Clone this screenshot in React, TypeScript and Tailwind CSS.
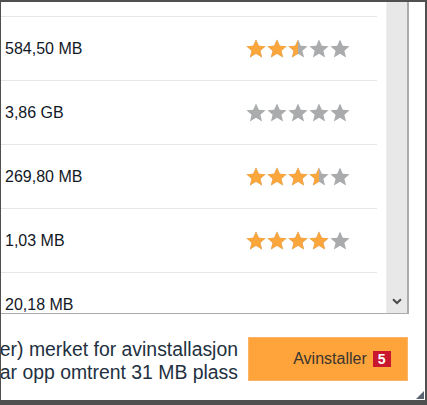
import React from 'react';

type Row = { size: string; rating: number | null };

const rows: Row[] = [
  { size: '584,50 MB', rating: 2.5 },
  { size: '3,86 GB', rating: 0 },
  { size: '269,80 MB', rating: 3.5 },
  { size: '1,03 MB', rating: 4 },
  { size: '20,18 MB', rating: null },
];

const STAR = '10,0.6 12.8,6.8 19.6,7.3 14.4,11.7 16.1,18.6 10,14.8 3.9,18.6 5.6,11.7 0.4,7.3 7.2,6.8';

const Stars: React.FC<{ value: number; id: string }> = ({ value, id }) => (
  <svg width="104" height="19" viewBox="0 0 104 19">
    {[0, 1, 2, 3, 4].map((i) => {
      const fill = Math.max(0, Math.min(1, value - i));
      return (
        <g key={i} transform={`translate(${i * 21}, 0)`}>
          <polygon points={STAR} fill="#a9abac" />
          {fill > 0 && (
            <>
              <clipPath id={`${id}-${i}`}>
                <rect x="0" y="0" width={20 * fill} height="20" />
              </clipPath>
              <polygon points={STAR} fill="#fba63c" clipPath={`url(#${id}-${i})`} />
            </>
          )}
        </g>
      );
    })}
  </svg>
);

export default function App() {
  return (
    <div className="w-[427px] h-[405px] bg-white border-t-2 border-l border-r-2 border-b-[5px] border-[#505050] flex flex-col overflow-hidden">
      {/* List box */}
      <div className="h-[312px] w-[408px] flex border-r-2 border-b border-[#ababab] shrink-0">
        <div className="flex-1 pt-[14px] pr-[9px] overflow-hidden">
          {rows.map((r, idx) => (
            <div
              key={idx}
              className="h-[64px] border-t border-[#e6e6e6] flex items-center justify-between pl-[4px] pr-[27px]"
            >
              <span className="text-[16px] text-[#121826] font-['Liberation_Sans',Arial,sans-serif]">{r.size}</span>
              {r.rating !== null && <Stars value={r.rating} id={`s${idx}`} />}
            </div>
          ))}
        </div>
        <div className="w-[21px] bg-[#e8e8e8] border-l border-[#efefef] flex flex-col justify-end items-center pb-[8px]">
          <svg width="10" height="7" viewBox="0 0 10 7">
            <path d="M1 1.2 L5 5 L9 1.2" fill="none" stroke="#4a4a4a" strokeWidth="2" />
          </svg>
        </div>
      </div>

      {/* Footer */}
      <div className="flex-1 flex items-start pt-[23px] relative">
        <div className="w-[237px] flex justify-end overflow-hidden whitespace-nowrap">
          <div className="text-right text-[19.4px] leading-[23px] text-[#223040] font-['Liberation_Sans',Arial,sans-serif] mt-[1px]">
            <div>1 program(mer) merket for avinstallasjon</div>
            <div>Disse tar opp omtrent 31 MB plass</div>
          </div>
        </div>
        <button className="ml-[10px] w-[160px] h-[44px] bg-[#ffa43a] border border-[#f9b46a] flex items-center justify-center gap-[6px] pl-[28px]">
          <span className="text-[16px] text-[#3a3530] font-['Liberation_Sans',Arial,sans-serif]">Avinstaller</span>
          <span className="w-[18px] h-[16px] bg-[#c8172f] text-white text-[14px] font-bold leading-[16px] text-center font-['Liberation_Sans',Arial,sans-serif]">5</span>
        </button>
        <svg className="absolute right-[1px] bottom-[1px]" width="8" height="8" viewBox="0 0 8 8">
          <polygon points="8,0 8,8 0,8" fill="#5a6470" />
        </svg>
      </div>
    </div>
  );
}
